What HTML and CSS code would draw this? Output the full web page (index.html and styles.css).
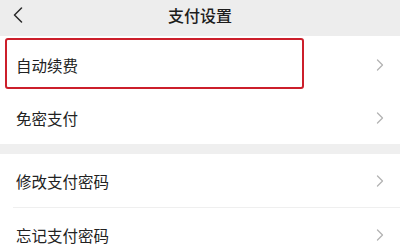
FILE: index.html
```html
<!DOCTYPE html>
<html lang="zh-CN">
<head>
<meta charset="utf-8">
<title>支付设置</title>
<link rel="stylesheet" href="styles.css">
</head>
<body>
<div class="header">
  <div class="back">
    <svg width="10" height="16" viewBox="0 0 10 16"><path d="M8.5 1 L1.5 8 L8.5 15" fill="none" stroke="#2a2a2a" stroke-width="1.5" stroke-linecap="round" stroke-linejoin="round"/></svg>
  </div>
  <div class="title">支付设置</div>
  <div></div>
</div>
<div class="group first">
  <div class="row highlighted">
    <span class="label">自动续费</span>
    <svg class="chev" width="8" height="12" viewBox="0 0 8 12"><path d="M1.5 1 L6.5 6 L1.5 11" fill="none" stroke="#b3b3b3" stroke-width="1.3" stroke-linecap="round" stroke-linejoin="round"/></svg>
    <div class="mark"></div>
  </div>
  <div class="row">
    <span class="label">免密支付</span>
    <svg class="chev" width="8" height="12" viewBox="0 0 8 12"><path d="M1.5 1 L6.5 6 L1.5 11" fill="none" stroke="#b3b3b3" stroke-width="1.3" stroke-linecap="round" stroke-linejoin="round"/></svg>
  </div>
</div>
<div class="gap"></div>
<div class="group second">
  <div class="row lined">
    <span class="label">修改支付密码</span>
    <svg class="chev" width="8" height="12" viewBox="0 0 8 12"><path d="M1.5 1 L6.5 6 L1.5 11" fill="none" stroke="#b3b3b3" stroke-width="1.3" stroke-linecap="round" stroke-linejoin="round"/></svg>
  </div>
  <div class="row">
    <span class="label">忘记支付密码</span>
    <svg class="chev" width="8" height="12" viewBox="0 0 8 12"><path d="M1.5 1 L6.5 6 L1.5 11" fill="none" stroke="#b3b3b3" stroke-width="1.3" stroke-linecap="round" stroke-linejoin="round"/></svg>
  </div>
</div>
</body>
</html>
```
FILE: styles.css
```css
html, body {
  margin: 0;
  padding: 0;
  background: #ffffff;
  font-family: "Noto Sans CJK SC", "Noto Sans", sans-serif;
  color: #222222;
}
.header {
  height: 36px;
  background: #ededed;
  display: grid;
  grid-template-columns: 1fr auto 1fr;
  align-items: center;
}
.back {
  padding-left: 13px;
  display: flex;
  align-items: center;
  padding-bottom: 6px;
}
.title {
  font-size: 16px;
  font-weight: 500;
  color: #1c1c1c;
  padding-bottom: 6px;
}
.group {
  background: #ffffff;
}
.group.first {
  padding-top: 2px;
}
.row {
  position: relative;
  height: 53px;
  margin-left: 13px;
  padding-left: 3px;
  padding-right: 16px;
  display: flex;
  align-items: center;
  justify-content: space-between;
  box-sizing: border-box;
}
.second .row {
  height: 54px;
}
.row.lined {
  border-bottom: 1px solid #efefef;
}
.label {
  font-size: 15.5px;
  color: #222222;
}
.chev {
  display: block;
}
.gap {
  height: 10px;
  background: #efefef;
}
.mark {
  position: absolute;
  left: -8px;
  top: 0;
  width: 299px;
  height: 51px;
  border: 2px solid #cc1f2b;
  border-radius: 3px;
  box-sizing: border-box;
}
```
